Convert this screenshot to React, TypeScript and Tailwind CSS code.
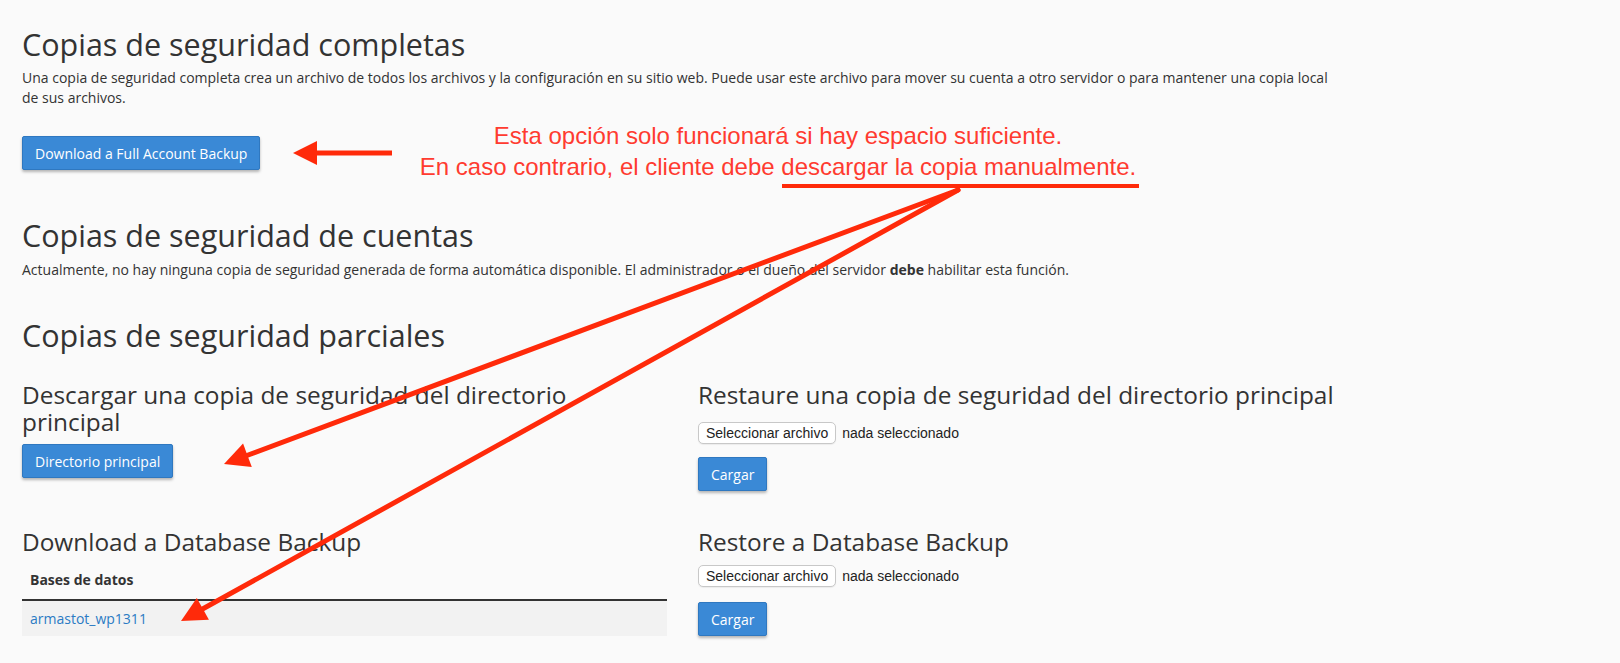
import React from 'react'

const RED = '#ff2a0a'

function headPoints(sx: number, sy: number, tx: number, ty: number, len = 25, half = 12.5) {
  const dx = tx - sx
  const dy = ty - sy
  const d = Math.hypot(dx, dy)
  const ux = dx / d
  const uy = dy / d
  const bx = tx - ux * len
  const by = ty - uy * len
  return `${tx},${ty} ${bx - uy * half},${by + ux * half} ${bx + uy * half},${by - ux * half}`
}

function Arrow({ sx, sy, tx, ty }: { sx: number; sy: number; tx: number; ty: number }) {
  const d = Math.hypot(tx - sx, ty - sy)
  const ex = tx - ((tx - sx) / d) * 20
  const ey = ty - ((ty - sy) / d) * 20
  return (
    <g>
      <line x1={sx} y1={sy} x2={ex} y2={ey} stroke={RED} strokeWidth={5} strokeLinecap="round" />
      <polygon points={headPoints(sx, sy, tx, ty)} fill={RED} />
    </g>
  )
}

function BlueButton({ children }: { children: React.ReactNode }) {
  return (
    <button
      type="button"
      className="h-[34px] rounded-[2px] border border-[#2f78c0] bg-[#3a89d6] px-[12px] text-[14px] text-white shadow-[0_2px_3px_rgba(0,0,0,0.28)]"
    >
      {children}
    </button>
  )
}

function FileInput() {
  return (
    <div className="flex items-center gap-[6px] font-['Liberation_Sans',Arial,sans-serif] text-[14px] text-[#222]">
      <span className="flex h-[22px] items-center rounded-[5px] border border-[#c8c8c8] bg-white px-[7px] shadow-[0_1px_1px_rgba(0,0,0,0.06)]">
        Seleccionar archivo
      </span>
      <span>nada seleccionado</span>
    </div>
  )
}

export default function App() {
  return (
    <div className="relative min-h-screen overflow-hidden bg-[#fafafa] px-[22px] pt-[28px] font-['Open_Sans',sans-serif] text-[14px] text-[#333]">
      {/* Full backups */}
      <h1 className="text-[30.5px] leading-[33px]">Copias de seguridad completas</h1>
      <p className="mt-[7px] max-w-[1316px] leading-[20px]">
        Una copia de seguridad completa crea un archivo de todos los archivos y la configuración en su sitio web. Puede usar este archivo para mover su cuenta a otro servidor o para mantener una copia local de sus archivos.
      </p>
      <div className="mt-[28px]">
        <BlueButton>Download a Full Account Backup</BlueButton>
      </div>

      {/* Account backups */}
      <h2 className="mt-[49px] text-[30.5px] leading-[33px]">Copias de seguridad de cuentas</h2>
      <p className="mt-[8px] leading-[20px]">
        Actualmente, no hay ninguna copia de seguridad generada de forma automática disponible. El administrador o el dueño del servidor <b>debe</b> habilitar esta función.
      </p>

      {/* Partial backups */}
      <h2 className="mt-[39px] text-[30.5px] leading-[33px]">Copias de seguridad parciales</h2>

      <div className="mt-[29px] grid grid-cols-[645px_1fr] gap-x-[31px] gap-y-[37px]">
        <div>
          <h3 className="max-w-[600px] text-[24.4px] leading-[27px]">Descargar una copia de seguridad del directorio principal</h3>
          <div className="mt-[9px]">
            <BlueButton>Directorio principal</BlueButton>
          </div>
        </div>
        <div>
          <h3 className="text-[24.4px] leading-[27px]">Restaure una copia de seguridad del directorio principal</h3>
          <div className="mt-[14px]">
            <FileInput />
          </div>
          <div className="mt-[13px]">
            <BlueButton>Cargar</BlueButton>
          </div>
        </div>

        <div>
          <h3 className="text-[24.4px] leading-[27px]">Download a Database Backup</h3>
          <div className="flex h-[46px] items-end border-b-2 border-[#333] pb-[9px] pl-[8px] font-bold">
            Bases de datos
          </div>
          <div className="flex h-[35px] items-center bg-[#f2f2f2] pl-[8px]">
            <a href="#" className="text-[#2b7bc4]">armastot_wp1311</a>
          </div>
        </div>
        <div>
          <h3 className="text-[24.4px] leading-[27px]">Restore a Database Backup</h3>
          <div className="mt-[10px]">
            <FileInput />
          </div>
          <div className="mt-[15px]">
            <BlueButton>Cargar</BlueButton>
          </div>
        </div>
      </div>

      {/* Annotation */}
      <div className="absolute left-[378px] top-[120px] w-[800px] text-center font-['Liberation_Sans',Arial,sans-serif] text-[24px] leading-[31px] text-[#ff3b30]">
        <div>Esta opción solo funcionará si hay espacio suficiente.</div>
        <div>En caso contrario, el cliente debe descargar la copia manualmente.</div>
      </div>
      <svg className="pointer-events-none absolute left-0 top-0" width="1620" height="663" viewBox="0 0 1620 663">
        <rect x="782" y="184" width="357" height="4" fill={RED} />
        <line x1="315" y1="153" x2="392" y2="153" stroke={RED} strokeWidth={5} />
        <polygon points="293,153 317,141 317,165" fill={RED} />
        <Arrow sx={958} sy={190} tx={224} ty={464} />
        <Arrow sx={958} sy={190} tx={181} ty={621} />
      </svg>
    </div>
  )
}
